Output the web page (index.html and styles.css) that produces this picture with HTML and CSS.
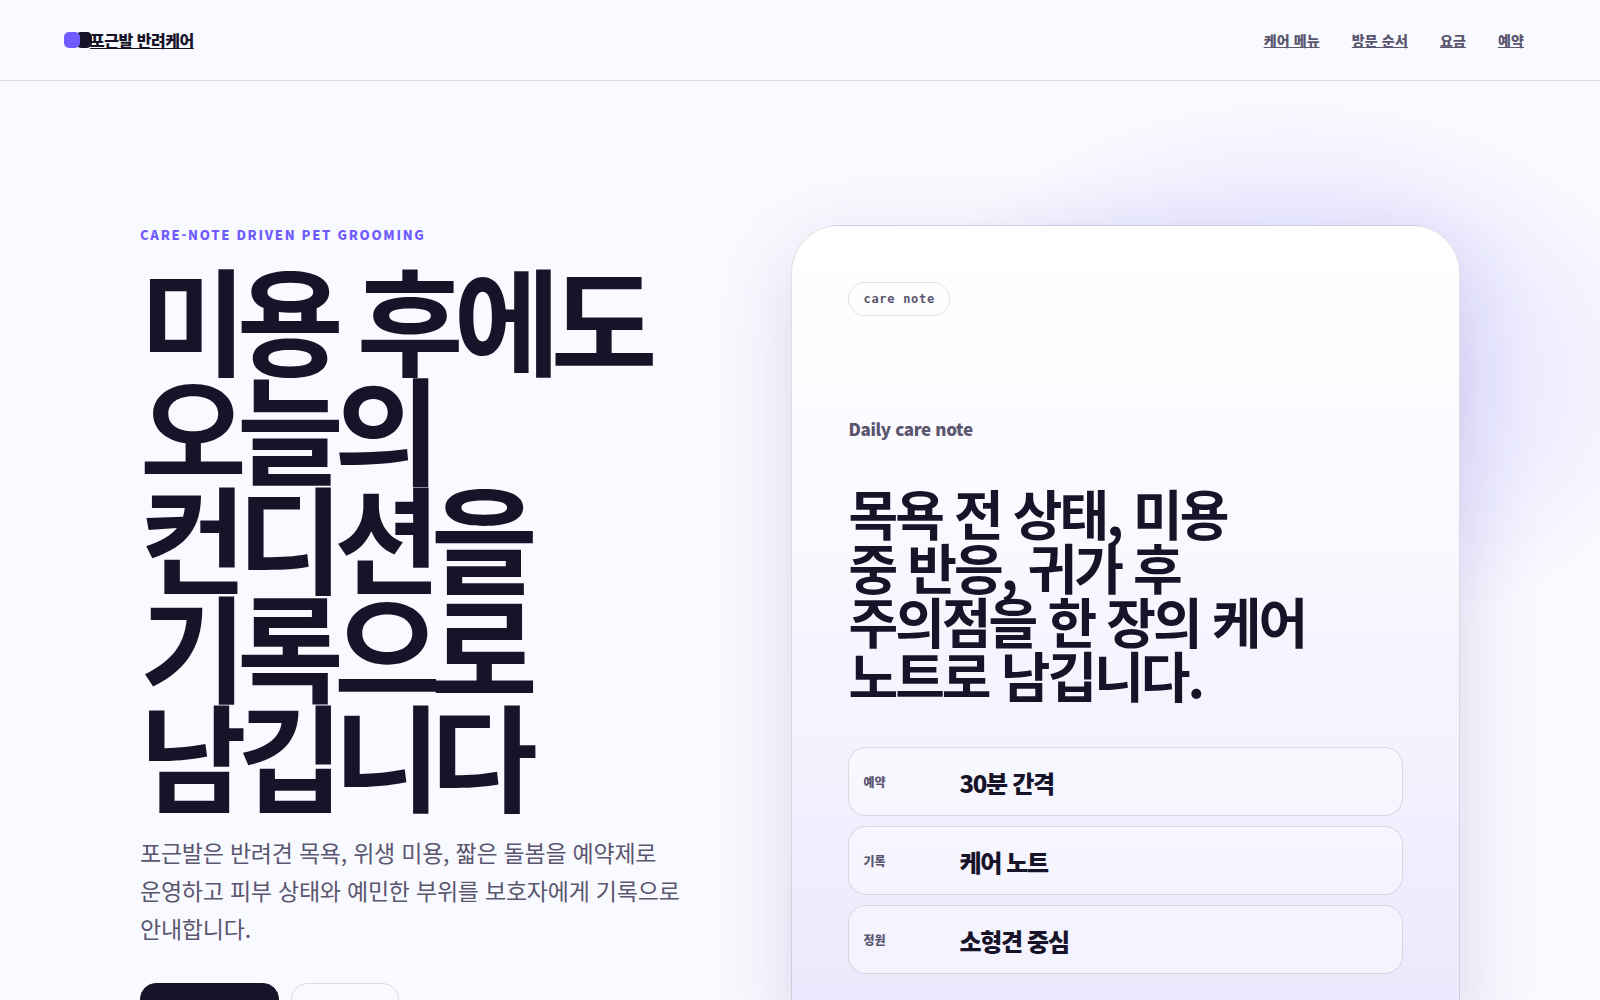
FILE: index.html
```html
<!DOCTYPE html>
<html lang="ko">
<head>
<meta charset="utf-8">
<meta name="viewport" content="width=device-width, initial-scale=1">
<title>포근발 반려케어</title>
<link rel="stylesheet" href="styles.css">
</head>
<body>
<header class="site-header">
  <a class="brand" href="#top"><span class="brand-mark" aria-hidden="true"></span>포근발 반려케어</a>
  <nav class="site-nav" aria-label="주요 메뉴">
    <a href="#menu">케어 메뉴</a>
    <a href="#steps">방문 순서</a>
    <a href="#price">요금</a>
    <a href="#booking">예약</a>
  </nav>
</header>
<main class="hero" id="top">
  <section class="intro">
    <p class="eyebrow">CARE-NOTE DRIVEN PET GROOMING</p>
    <h1 class="title">미용 후에도 오늘의 컨디션을 기록으로 남깁니다</h1>
    <p class="lead">포근발은 반려견 목욕, 위생 미용, 짧은 돌봄을 예약제로 운영하고 피부 상태와 예민한 부위를 보호자에게 기록으로 안내합니다.</p>
    <div class="actions">
      <a class="button button-primary" href="#booking">목욕 시간 예약</a>
      <a class="button" href="#menu">메뉴 보기</a>
    </div>
  </section>
  <aside class="note">
    <span class="pill">care note</span>
    <p class="note-label">Daily care note</p>
    <h2 class="note-title">목욕 전 상태, 미용<br>중 반응, 귀가 후<br>주의점을 한 장의 케어<br>노트로 남깁니다.</h2>
    <dl class="facts">
      <div class="fact"><dt>예약</dt><dd>30분 간격</dd></div>
      <div class="fact"><dt>기록</dt><dd>케어 노트</dd></div>
      <div class="fact"><dt>정원</dt><dd>소형견 중심</dd></div>
    </dl>
  </aside>
</main>
</body>
</html>
```

FILE: styles.css
```css
:root {
  --ink: #17142a;
  --muted: #5b5670;
  --accent: #6f5cff;
  --paper: #f9faff;
  --line: rgba(23, 20, 42, 0.13);
}

* {
  box-sizing: border-box;
}

body {
  margin: 0;
  background: var(--paper);
  color: var(--ink);
  font-family: "Noto Sans CJK KR", sans-serif;
  word-break: keep-all;
}

h1, h2, p, dl, dd {
  margin: 0;
}

.site-header {
  display: flex;
  align-items: center;
  justify-content: space-between;
  min-height: 81px;
  padding: 0 76px 0 64px;
  border-bottom: 1px solid var(--line);
}

.brand {
  display: flex;
  align-items: center;
  gap: 10px;
  color: var(--ink);
  font-size: 16px;
  font-weight: 900;
  letter-spacing: -0.03em;
}

.brand-mark {
  width: 16px;
  height: 16px;
  border-radius: 5px;
  background: var(--accent);
  box-shadow: 12px 0 0 var(--ink);
}

.site-nav {
  display: flex;
  gap: 32px;
}

.site-nav a {
  color: var(--muted);
  font-size: 14px;
  font-weight: 900;
  letter-spacing: 0.01em;
}

.hero {
  position: relative;
  isolation: isolate;
  overflow: hidden;
  display: grid;
  grid-template-columns: 540fr 668fr;
  gap: 111px;
  width: 100%;
  padding: 144px 140px 112px;
}

/* Soft violet glow behind the note card */
.hero::before {
  content: "";
  position: absolute;
  z-index: -1;
  top: 16px;
  right: -80px;
  width: 780px;
  height: 560px;
  background: radial-gradient(closest-side, rgba(111, 92, 255, 0.14), rgba(111, 92, 255, 0.12) 45%, rgba(111, 92, 255, 0.08) 66%, rgba(111, 92, 255, 0.03) 86%, rgba(111, 92, 255, 0));
}

.eyebrow {
  color: var(--accent);
  font-size: 13px;
  line-height: 20px;
  font-weight: 900;
  letter-spacing: 0.13em;
}

.title {
  margin-top: 17px;
  font-size: 116px;
  line-height: 109px;
  font-weight: 700;
  letter-spacing: -0.084em;
}

.lead {
  margin-top: 26px;
  color: var(--muted);
  font-size: 23px;
  line-height: 38px;
  letter-spacing: -0.01em;
}

.actions {
  display: flex;
  gap: 12px;
  margin-top: 36px;
}

.button {
  padding: 16px 23px;
  border: 1px solid var(--line);
  border-radius: 16px;
  color: var(--ink);
  font-size: 15px;
  font-weight: 700;
  text-decoration: none;
}

.button-primary {
  border-color: var(--ink);
  background: var(--ink);
  color: #fff;
}

.note {
  padding: 56px 56px 76px;
  border: 1px solid var(--line);
  border-radius: 48px;
  background: linear-gradient(#fff, #f9f8ff 40%, #e9e8fd);
  box-shadow: 0 24px 80px rgba(49, 30, 140, 0.16);
}

.pill {
  display: inline-block;
  padding: 7px 14px;
  border: 1px solid var(--line);
  border-radius: 17px;
  color: var(--muted);
  font-family: "DejaVu Sans Mono", monospace;
  font-size: 12px;
  line-height: 18px;
  font-weight: 700;
  letter-spacing: 0.06em;
}

.note-label {
  margin-top: 99px;
  color: var(--muted);
  font-size: 17px;
  line-height: 28px;
  font-weight: 900;
  letter-spacing: -0.02em;
}

.note-title {
  margin-top: 43px;
  font-size: 54px;
  line-height: 54px;
  font-weight: 700;
  letter-spacing: -0.055em;
}

.facts {
  display: grid;
  gap: 10px;
  margin-top: 45px;
}

.fact {
  display: grid;
  grid-template-columns: 82px 1fr;
  gap: 14px;
  align-items: center;
  min-height: 69px;
  padding: 14px;
  border: 1px solid var(--line);
  border-radius: 18px;
  background: rgba(255, 255, 255, 0.42);
}

.fact dt {
  color: var(--muted);
  font-size: 12px;
  font-weight: 900;
}

.fact dd {
  padding-top: 3px;
  font-size: 24px;
  line-height: 36px;
  font-weight: 900;
  letter-spacing: -0.055em;
}
```
